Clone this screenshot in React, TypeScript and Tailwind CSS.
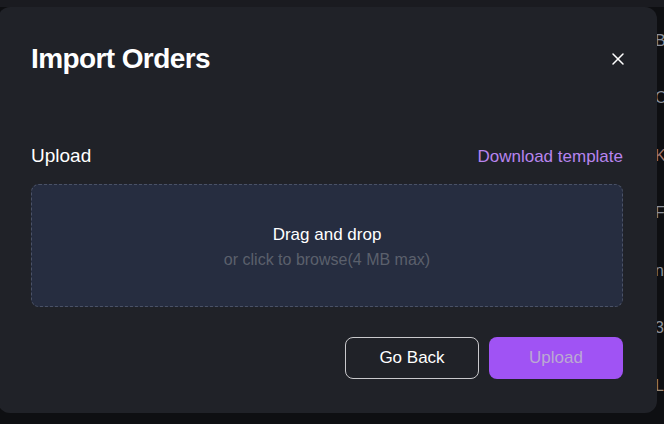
import { X } from "lucide-react";

const font = { fontFamily: '"Liberation Sans", Arial, sans-serif' };

// filas de la tabla de fondo que asoman por la derecha del modal
const rows = [
  { t: "B", c: "text-[#8b909b]" },
  { t: "O", c: "text-[#8b909b]" },
  { t: "K", c: "text-[#a0756c]" },
  { t: "F", c: "text-[#8b909b]", bar: true },
  { t: "n", c: "text-[#8b909b]" },
  { t: "3Z", c: "text-[#8b909b]" },
  { t: "L", c: "text-[#9c8a76]" },
];

export default function App() {
  return (
    <div
      className="relative w-[664px] h-[424px] overflow-hidden bg-[#0e0f12]"
      style={font}
    >
      {/* fondo: la página debajo del modal */}
      <div className="h-[7px] bg-[#1a1b20]" />
      <div className="flex flex-col pt-[5px] pl-[655px]">
        {rows.map((r) => (
          <div key={r.t} className={`h-[57.5px] flex items-center text-[16px] whitespace-nowrap ${r.c}`}>
            {r.t}
            {r.bar && <span className="ml-[1px] inline-block w-[3px] h-[12px] bg-[#4757d6]" />}
          </div>
        ))}
      </div>

      {/* modal */}
      <div className="absolute left-[-2px] top-[7px] w-[659px] h-[406px] rounded-[12px] bg-[#202228] pl-[33px] pr-[34px] pt-[38px] flex flex-col">
        <div className="flex items-center justify-between h-[28px]">
          <h2 className="text-[28px] leading-[28px] font-bold tracking-[-0.6px] text-white">
            Import Orders
          </h2>
          <button className="w-[20px] h-[20px] flex items-center justify-center text-white mr-[-5px]">
            <X size={20} strokeWidth={1.8} />
          </button>
        </div>

        <div className="mt-[73px] flex items-baseline justify-between h-[20px]">
          <span className="text-[19px] leading-[20px] text-white">Upload</span>
          <a className="text-[17px] leading-[20px] text-[#b784ee] cursor-pointer">Download template</a>
        </div>

        <div className="mt-[18px] h-[123px] rounded-[8px] border border-dashed border-[#4a5267] bg-[#262d40] flex flex-col items-center justify-center pt-[5px]">
          <span className="text-[17px] leading-[22px] text-white">Drag and drop</span>
          <span className="mt-[1.5px] text-[16px] leading-[24px] text-[#5b606c]">
            or click to browse(4 MB max)
          </span>
        </div>

        <div className="mt-[30px] flex justify-end gap-[10px]">
          <button className="w-[134px] h-[42px] rounded-[8px] border border-[#c9c9cc] text-[17px] text-white">
            Go Back
          </button>
          <button className="w-[134px] h-[42px] rounded-[8px] bg-[#a053f4] text-[17px] text-[#bba9d2]">
            Upload
          </button>
        </div>
      </div>
    </div>
  );
}
